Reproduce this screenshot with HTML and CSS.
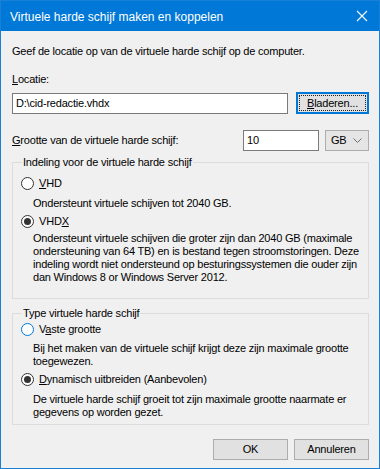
FILE: index.html
```html
<!DOCTYPE html>
<html lang="nl">
<head>
<meta charset="UTF-8">
<meta name="viewport" content="width=device-width, initial-scale=1.0">
<title>Virtuele harde schijf maken en koppelen</title>
<link rel="stylesheet" href="styles.css">
</head>
<body>
<div class="window">
  <div class="titlebar">
    <span class="title">Virtuele harde schijf maken en koppelen</span>
    <svg class="close" width="12" height="12" viewBox="0 0 12 12"><path d="M1 1L11 11M11 1L1 11" stroke="#fff" stroke-width="1.1" fill="none"/></svg>
  </div>

  <div class="content">
    <p class="intro">Geef de locatie op van de virtuele harde schijf op de computer.</p>

    <p class="lbl-loc"><u>L</u>ocatie:</p>
    <div class="row-loc">
      <div class="textbox path">D:\cid-redactie.vhdx</div>
      <div class="btn default"><span class="focus"><u>B</u>laderen...</span></div>
    </div>

    <div class="row-size">
      <span class="lbl-size"><u>G</u>rootte van de virtuele harde schijf:</span>
      <div class="textbox size">10</div>
      <div class="combo">GB
        <svg class="chev" width="9" height="5" viewBox="0 0 9 5"><path d="M0.5 0.5L4.5 4.5L8.5 0.5" stroke="#6d6d6d" fill="none"/></svg>
      </div>
    </div>

    <!-- Indeling -->
    <fieldset class="group g-format">
      <legend>Indeling voor de virtuele harde schijf</legend>
      <div class="radio r-vhd"><span class="dot"></span><span><u>V</u>HD</span></div>
      <p class="desc d-vhd">Ondersteunt virtuele schijven tot 2040 GB.</p>
      <div class="radio r-vhdx"><span class="dot on"></span><span>VHD<u>X</u></span></div>
      <p class="desc d-vhdx">Ondersteunt virtuele schijven die groter zijn dan 2040 GB (maximale<br>ondersteuning van 64 TB) en is bestand tegen stroomstoringen. Deze<br>indeling wordt niet ondersteund op besturingssystemen die ouder zijn<br>dan Windows 8 or Windows Server 2012.</p>
    </fieldset>

    <!-- Type -->
    <fieldset class="group g-type">
      <legend>Type virtuele harde schijf</legend>
      <div class="radio r-fixed"><span class="dot hover"></span><span>V<u>a</u>ste grootte</span></div>
      <p class="desc d-fixed">Bij het maken van de virtuele schijf krijgt deze zijn maximale grootte<br>toegewezen.</p>
      <div class="radio r-dyn"><span class="dot on"></span><span><u>D</u>ynamisch uitbreiden (Aanbevolen)</span></div>
      <p class="desc d-dyn">De virtuele harde schijf groeit tot zijn maximale grootte naarmate er<br>gegevens op worden gezet.</p>
    </fieldset>

    <div class="buttons">
      <div class="btn">OK</div>
      <div class="btn">Annuleren</div>
    </div>
  </div>
</div>
</body>
</html>
```

FILE: styles.css
```css
body{margin:0;font-family:"Liberation Sans",Arial,sans-serif;font-size:11px;letter-spacing:-0.2px;color:#000;background:#fff;}
p{margin:0;}
u{text-decoration:underline;text-underline-offset:1px;}

.window{width:378px;height:467px;border:1px solid #1a7fd6;background:#f0f0f0;overflow:hidden;}
.titlebar{height:30px;background:#0078d7;color:#fff;display:flex;align-items:center;justify-content:space-between;padding:0 10px 0 9px;}
.title{font-size:12px;letter-spacing:0;padding-top:1px;}
.close{margin-right:1px;}

.content{padding:0 10px 0 11px;line-height:15px;}
.intro{padding-top:13px;}
.lbl-loc{margin-top:13px;}

.row-loc{display:flex;align-items:center;gap:8px;margin-top:5px;}
.textbox{background:#fff;border:1px solid #7a7a7a;height:19px;line-height:19px;padding-left:3px;box-sizing:content-box;}
.textbox.path{width:271px;}
.btn{box-sizing:border-box;width:73px;height:21px;border:1px solid #adadad;background:#e1e1e1;display:flex;align-items:center;justify-content:center;}
.btn.default{border:2px solid #0078d7;height:22px;padding:1px;}
.focus{flex:1;align-self:stretch;border:1px dotted #222;display:flex;align-items:center;justify-content:center;}

.row-size{display:flex;align-items:center;gap:6px;margin-top:16px;}
.lbl-size{flex:1;}
.textbox.size{width:71px;}
.combo{box-sizing:border-box;width:44px;height:21px;border:1px solid #adadad;background:#e5e5e5;display:flex;align-items:center;justify-content:space-between;padding:0 6px 0 5px;}

.group{margin:0;border:1px solid #dcdcdc;padding:0 8px 0 8px;min-width:0;}
.group legend{padding:0 1px 0 1px;margin-left:1px;line-height:13px;}
.g-format{margin-top:5px;padding-top:8px;padding-bottom:14px;}
.g-type{margin-top:8px;padding-top:3px;padding-bottom:5px;}

.radio{display:flex;align-items:center;gap:5px;line-height:13px;}
.dot{width:11px;height:11px;border:1px solid #333;border-radius:50%;background:#fff;position:relative;}
.dot.on::after{content:"";position:absolute;left:2px;top:2px;width:7px;height:7px;border-radius:50%;background:#333;}
.dot.hover{border-color:#0078d7;}

.desc{margin-left:12px;line-height:13px;white-space:nowrap;}
.d-vhd{margin-top:7px;}
.r-vhdx{margin-top:5px;}
.d-vhdx{margin-top:4px;}
.d-fixed{margin-top:6px;}
.r-dyn{margin-top:5px;}
.d-dyn{margin-top:7px;}

.buttons{display:flex;justify-content:flex-end;gap:6px;margin-top:14px;}
.buttons .btn{width:75px;}
```
